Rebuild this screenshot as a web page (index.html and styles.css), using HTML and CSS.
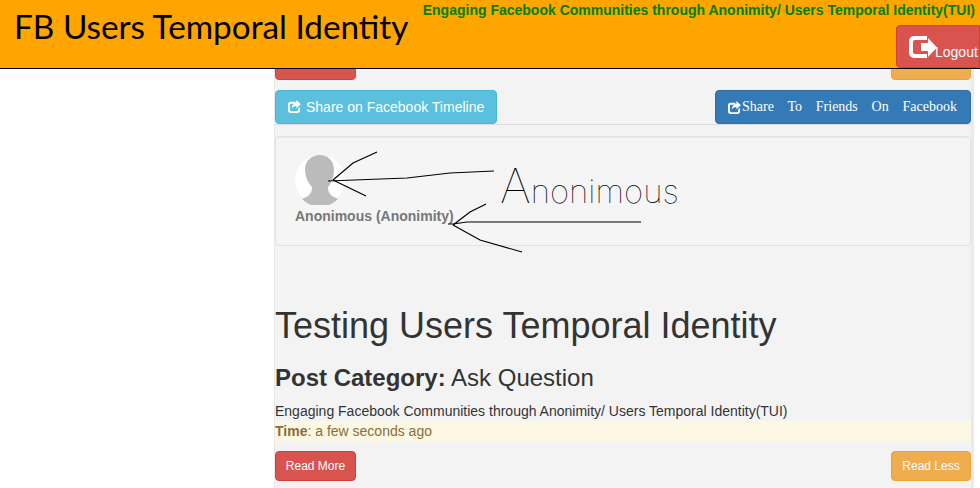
FILE: index.html
```html
<!DOCTYPE html>
<html lang="en">
<head>
    <meta charset="UTF-8">
    <meta name="viewport" content="width=device-width, initial-scale=1.0">
    <title>FB Users Temporal Identity</title>
    <link rel="stylesheet" href="styles.css">
</head>
<body>
    <header class="site-header">
        <div class="site-title">FB Users Temporal Identity</div>
        <div class="header-right">
            <div class="tagline">Engaging Facebook Communities through Anonimity/ Users Temporal Identity(TUI)</div>
            <a class="btn btn-danger logout">
                <svg class="logout-icon" viewBox="0 0 28 22"><path d="M5 0h13v4H6a2 2 0 0 0-2 2v10a2 2 0 0 0 2 2h12v4H5a5 5 0 0 1-5-5V5a5 5 0 0 1 5-5z"/><path d="M12 7h7V2l9 9.500L19 21v-6h-7z"/></svg>
                <span class="logout-text">Logout</span>
            </a>
        </div>
    </header>

    <div class="page">
        <main class="content">
            <div class="btn-row">
                <a class="btn btn-danger btn-read">Read More</a>
                <a class="btn btn-warning btn-read">Read Less</a>
            </div>
            <div class="btn-row share-row">
                <a class="btn btn-info btn-share">
                    <svg class="share-icon" viewBox="0 0 14 14"><path d="M3 2h5v2H3.500A1.500 1.500 0 0 0 2 5.500v5A1.500 1.500 0 0 0 3.500 12h6A1.500 1.500 0 0 0 11 10.500V9l2-1.500V11a3 3 0 0 1-3 3H3a3 3 0 0 1-3-3V5a3 3 0 0 1 3-3z"/><path d="M9 0l5 4.500L9 9V6.500C6.500 6.500 5 7.500 4 9.500 4 6 6 3.500 9 3z"/></svg>Share on Facebook Timeline
                </a>
                <a class="btn btn-primary btn-friends">
                    <svg class="share-icon" viewBox="0 0 14 14"><path d="M3 2h5v2H3.500A1.500 1.500 0 0 0 2 5.500v5A1.500 1.500 0 0 0 3.500 12h6A1.500 1.500 0 0 0 11 10.500V9l2-1.500V11a3 3 0 0 1-3 3H3a3 3 0 0 1-3-3V5a3 3 0 0 1 3-3z"/><path d="M9 0l5 4.500L9 9V6.500C6.500 6.500 5 7.500 4 9.500 4 6 6 3.500 9 3z"/></svg>Share To Friends On Facebook
                </a>
            </div>

            <div class="well">
                <svg class="avatar" viewBox="0 0 50 50">
                    <circle cx="25" cy="25" r="25" fill="#fff"/>
                    <path fill="#bbb" d="M25 0C33 0 39 6 39 15C39 22 36 29 33 32C33 36 34 38 37 41C39 42 41 43 43 44A25 25 0 0 1 7 44C10 43 13 41 14 40C16 38 17 36 17 32C13 28 10 21 10 14C10 6 17 0 25 0Z"/>
                </svg>
                <div class="user-name">Anonimous (Anonimity)</div>
            </div>

            <h1 class="post-title">Testing Users Temporal Identity</h1>
            <h3 class="post-category"><b>Post Category:</b> Ask Question</h3>
            <p class="post-body">Engaging Facebook Communities through Anonimity/ Users Temporal Identity(TUI)</p>
            <div class="post-time"><b>Time</b>: a few seconds ago</div>
            <div class="btn-row read-row">
                <a class="btn btn-danger btn-read">Read More</a>
                <a class="btn btn-warning btn-read">Read Less</a>
            </div>
        </main>
    </div>

    <!-- hand drawn notes on top of the screenshot -->
    <svg class="scribble" viewBox="0 0 980 488">
        <path d="M494 171L450 173L407 178L328 181"/>
        <path d="M333 180L353 163L377 152"/>
        <path d="M333 180L366 196"/>
        <path d="M641 222L467 222L453 224L448 224"/>
        <path d="M453 225L470 212L486 204"/>
        <path d="M453 225L480 240L522 252"/>
    </svg>
    <div class="scribble-text">Anonimous</div>
</body>
</html>
```

FILE: styles.css
```css
html, body {
    margin: 0;
    padding: 0;
    height: 488px;
    overflow: hidden;
    background: #fff;
    font-family: "Liberation Sans", Arial, sans-serif;
    font-size: 14px;
    color: #333;
}
.site-header {
    position: fixed;
    top: 0;
    left: 0;
    right: 0;
    height: 68px;
    background: orange;
    border-bottom: 1px solid #000;
    display: flex;
    justify-content: space-between;
    z-index: 5;
}
.site-title {
    font-family: "Lato", sans-serif;
    font-size: 33.3px;
    color: #000;
    padding: 6px 0 0 14px;
    white-space: nowrap;
}
.header-right {
    display: flex;
    flex-direction: column;
    align-items: flex-end;
}
.tagline {
    font-weight: bold;
    font-size: 14px;
    color: green;
    padding: 2px 5px 0 0;
    white-space: nowrap;
}
.btn {
    display: inline-flex;
    align-items: center;
    box-sizing: border-box;
    border: 1px solid transparent;
    border-radius: 4px;
    color: #fff;
    white-space: nowrap;
}
.btn-danger { background: #d9534f; border-color: #d43f3a; }
.btn-warning { background: #f0ad4e; border-color: #eea236; }
.btn-info { background: #5bc0de; border-color: #46b8da; }
.btn-primary { background: #337ab7; border-color: #2e6da4; }
.logout {
    height: 43px;
    width: 84px;
    margin-top: 7px;
    padding-left: 12px;
    border-radius: 4px 0 0 4px;
    align-self: flex-end;
}
.logout-icon {
    width: 28px;
    height: 22px;
    fill: #fff;
    margin-right: -2px;
    flex: none;
}
.logout-text { margin-top: 10px; }
.page {
    display: flex;
    padding-left: 274px;
}
.content {
    box-sizing: border-box;
    width: 700px;
    height: 488px;
    padding-top: 50px;
    background: #f3f3f3;
    border-left: 1px solid #e8e8e8;
    border-right: 3px solid #eaeaea;
}
.btn-row {
    display: flex;
    justify-content: space-between;
}
.btn-read {
    height: 30px;
    width: 81px;
    justify-content: center;
    font-size: 12px;
}
.btn-warning.btn-read { width: 80px; }
.share-row {
    margin-top: 10px;
    height: 34px;
    border-bottom: 1px solid #ddd;
}
.btn-share {
    height: 34px;
    width: 222px;
    padding-left: 12px;
    padding-bottom: 1px;
    font-size: 14px;
}
.btn-friends {
    height: 34px;
    width: 256px;
    padding-left: 12px;
    font-family: "Liberation Serif", serif;
    font-size: 14px;
    word-spacing: 10.3px;
}
.share-icon {
    width: 13px;
    height: 13px;
    fill: #fff;
    margin-right: 5px;
}
.btn-friends .share-icon { margin-right: 1px; }
.well {
    box-sizing: border-box;
    height: 110px;
    margin-top: 11px;
    padding: 19px;
    background: #f5f5f5;
    border: 1px solid #e3e3e3;
    border-radius: 4px;
    box-shadow: inset 0 1px 1px rgba(0, 0, 0, .05);
}
.avatar {
    display: block;
    width: 50px;
    height: 50px;
    margin-top: -1px;
}
.user-name {
    margin-top: 3px;
    font-weight: bold;
    color: #777;
}
.post-title {
    margin: 60px 0 0;
    font-size: 36px;
    font-weight: 500;
    line-height: 40px;
}
.post-category {
    margin: 19px 0 0;
    font-size: 24px;
    font-weight: 500;
    line-height: 26px;
}
.post-body {
    margin: 10px 0 0;
    line-height: 20px;
}
.post-time {
    background: #fcf8e3;
    color: #8a6d3b;
    line-height: 20px;
    height: 20px;
}
.read-row { margin-top: 10px; }
.scribble {
    position: absolute;
    top: 0;
    left: 0;
    width: 980px;
    height: 488px;
    fill: none;
    stroke: #000;
    stroke-width: 1.2;
    pointer-events: none;
}
.scribble-text {
    position: absolute;
    left: 500px;
    top: 166px;
    font-family: "Inter", sans-serif;
    font-weight: 100;
    font-size: 33px;
    line-height: 40px;
    color: #000;
}
.scribble-text::first-letter {
    font-size: 48px;
}
```
